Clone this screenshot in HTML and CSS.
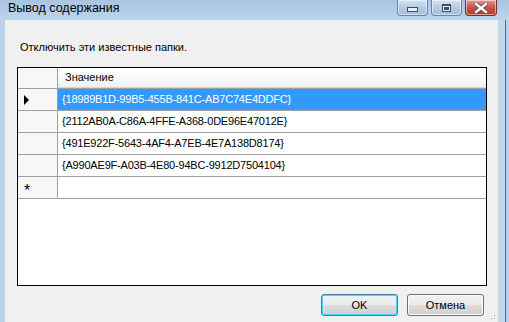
FILE: index.html
```html
<!DOCTYPE html>
<html lang="ru">
<head>
    <meta charset="UTF-8">
    <title>Вывод содержания</title>
    <link rel="stylesheet" href="styles.css">
</head>
<body>
    <div class="window">
        <div class="titlebar">
            <span class="title">Вывод содержания</span>
            <div class="caption-buttons">
                <div class="cap-btn"><span class="min-glyph"></span></div>
                <div class="cap-btn"><span class="max-glyph"></span></div>
                <div class="cap-btn close">
                    <svg width="14" height="10" viewBox="0 0 14 10">
                        <path d="M2 1 L12 9 M12 1 L2 9" stroke="#4a4a4a" stroke-width="4" stroke-linecap="square"/>
                        <path d="M2 1 L12 9 M12 1 L2 9" stroke="#ffffff" stroke-width="2.4" stroke-linecap="square"/>
                    </svg>
                </div>
            </div>
        </div>
        <div class="frame-row">
            <div class="frame-left"></div>
            <div class="client">
                <p class="caption">Отключить эти известные папки.</p>
                <div class="grid">
                    <div class="row header">
                        <div class="rh"></div>
                        <div class="cell">Значение</div>
                    </div>
                    <div class="row selected">
                        <div class="rh"><span class="arrow"></span></div>
                        <div class="cell">{18989B1D-99B5-455B-841C-AB7C74E4DDFC}</div>
                    </div>
                    <div class="row">
                        <div class="rh"></div>
                        <div class="cell">{2112AB0A-C86A-4FFE-A368-0DE96E47012E}</div>
                    </div>
                    <div class="row">
                        <div class="rh"></div>
                        <div class="cell">{491E922F-5643-4AF4-A7EB-4E7A138D8174}</div>
                    </div>
                    <div class="row">
                        <div class="rh"></div>
                        <div class="cell">{A990AE9F-A03B-4E80-94BC-9912D7504104}</div>
                    </div>
                    <div class="row">
                        <div class="rh star">*</div>
                        <div class="cell"></div>
                    </div>
                </div>
                <div class="buttons">
                    <button class="btn default">OK</button>
                    <button class="btn">Отмена</button>
                </div>
                <div class="grip"></div>
            </div>
            <div class="frame-right"></div>
        </div>
    </div>
</body>
</html>
```

FILE: styles.css
```css
body {
    margin: 0;
    width: 509px;
    height: 322px;
    overflow: hidden;
    font-family: "Liberation Sans", Arial, sans-serif;
}
.window {
    width: 509px;
    height: 322px;
    background: #b9d1ea;
    display: flex;
    flex-direction: column;
}
.titlebar {
    height: 20px;
    display: flex;
    justify-content: space-between;
    background: linear-gradient(#a9c4e1, #bdd5ee);
}
.title {
    font-family: "Liberation Sans", Arial, sans-serif;
    font-size: 12.5px;
    line-height: 17px;
    padding-left: 8px;
    color: #000;
}
.caption-buttons {
    display: flex;
    gap: 3px;
    padding-right: 12px;
    height: 17px;
}
.cap-btn {
    width: 29px;
    height: 15px;
    border: 1px solid #6d85a3;
    border-top: none;
    border-radius: 0 0 4px 4px;
    background: linear-gradient(#d5e3f2, #b5cbe4 50%, #a6bed9);
    box-shadow: inset 0 0 0 1px rgba(255, 255, 255, 0.5);
    display: flex;
    align-items: center;
    justify-content: center;
}
.cap-btn.close {
    width: 30px;
    border-color: #7a3028;
    background: linear-gradient(#e09c90, #c9524a 50%, #b8382e);
}
.min-glyph {
    width: 9px;
    height: 3px;
    margin-top: 3px;
    background: #e8eef5;
    border: 1px solid #3f4f63;
}
.max-glyph {
    width: 7px;
    height: 5px;
    background: #e8eef5;
    border: 1px solid #3f4f63;
    border-top-width: 2px;
    box-shadow: inset 0 0 0 1px #e8eef5, inset 0 0 0 3px #3f4f63;
}
.frame-row {
    flex: 1;
    display: flex;
}
.frame-left {
    width: 5px;
}
.client {
    width: 493px;
    background: #f0f0f0;
    position: relative;
}
.frame-right {
    width: 7px;
    border-right: 1px solid #5a6b80;
    background: #c2d8ee;
}
.caption {
    margin: 0;
    padding: 20px 0 0 15px;
    font-size: 11px;
    line-height: 14px;
    height: 13px;
    color: #000;
}
.grid {
    margin: 14px 0 0 12px;
    width: 468px;
    height: 217px;
    border: 1px solid #000;
    background: #fff;
}
.row {
    display: flex;
    height: 21px;
    border-bottom: 1px solid #a0a0a0;
}
.rh {
    width: 40px;
    border-right: 1px solid #a0a0a0;
    background: #f7f7f7;
    display: flex;
    align-items: center;
    padding-left: 6px;
    box-sizing: border-box;
}
.cell {
    flex: 1;
    font-size: 11px;
    letter-spacing: -0.2px;
    line-height: 21px;
    padding-left: 4px;
    color: #000;
    white-space: nowrap;
}
.header {
    height: 20px;
    border-bottom: 1px solid #a0a0a0;
}
.header .rh {
    background: #f7f7f9;
}
.header .cell {
    letter-spacing: 0;
    line-height: 19px;
    padding-left: 7px;
    background: linear-gradient(#ffffff, #f7f8fa 60%, #eef0f3);
    border-bottom: 1px solid #d5d5d5;
}
.selected .cell {
    background: #3399ff;
    color: #fff;
}
.arrow {
    width: 0;
    height: 0;
    border-top: 5px solid transparent;
    border-bottom: 5px solid transparent;
    border-left: 5px solid #000;
}
.star {
    font-size: 16px;
    padding-top: 6px;
    line-height: 21px;
}
.buttons {
    display: flex;
    gap: 9px;
    margin: 8px 0 0 316px;
}
.btn {
    width: 77px;
    height: 22px;
    padding: 0;
    font-family: "Liberation Sans", Arial, sans-serif;
    font-size: 11px;
    color: #000;
    border: 1px solid #707070;
    border-radius: 3px;
    background: linear-gradient(#f2f2f2, #ebebeb 50%, #dddddd 51%, #cfcfcf);
    box-shadow: inset 0 0 0 1px #fcfcfc;
}
.btn.default {
    border-color: #3c7fb1;
    box-shadow: inset 0 0 0 1px #48d8fd;
}
.grip {
    position: absolute;
    right: 1px;
    bottom: 1px;
    width: 10px;
    height: 10px;
    background: radial-gradient(circle, #a0a0a0 0.8px, transparent 1px) 0 0 / 3px 3px;
    clip-path: polygon(100% 0, 100% 100%, 0 100%);
}
```
